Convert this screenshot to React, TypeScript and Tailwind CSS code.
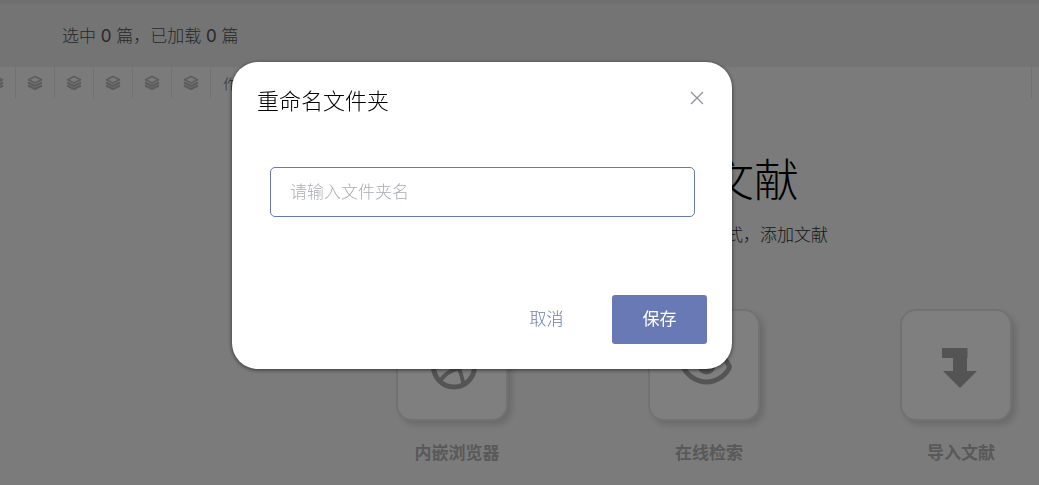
import React from 'react';

const LayersIcon = () => (
  <svg className="w-4 h-4" viewBox="0 0 16 16" fill="none" stroke="currentColor" strokeLinejoin="round" aria-hidden="true">
    <path d="M8 1.500L14.500 4.800L8 8L1.500 4.800Z" strokeWidth="1.600" />
    <path d="M1 7.500L8 11L15 7.500M1 10.500L8 14L15 10.500" strokeWidth="2.200" />
  </svg>
);

const BrowserIcon = () => (
  <svg className="w-12 h-12 overflow-visible" viewBox="0 -1 48 48" fill="none" stroke="currentColor" aria-hidden="true">
    <circle cx="26" cy="24.500" r="20.500" strokeWidth="5" />
    <path d="M12 39C16 33 22 28.500 30 26.500C36 25 41 23 46 22" strokeWidth="4" />
    <path d="M18 6C27 16 33 28 35.500 42M6 20C20 21 32 18 40 10" strokeWidth="4" />
  </svg>
);

const EyeIcon = () => (
  <svg className="w-12 h-12 overflow-visible" viewBox="0 -1 48 48" fill="none" stroke="currentColor" aria-hidden="true">
    <path d="M3.500 24.500C14 4 40 4 49.500 24.500C48 31 38 40 26.500 40C15 40 5 31 3.500 24.500Z" strokeWidth="5" strokeLinejoin="round" />
    <circle cx="26.500" cy="23.500" r="9" fill="currentColor" stroke="none" />
  </svg>
);

const ImportIcon = () => (
  <svg className="w-12 h-12 overflow-visible" viewBox="0 -1 48 48" fill="currentColor" aria-hidden="true">
    <path d="M10 6H35.500V16H35V29H45L28 46L11 29H21V16H10Z" />
  </svg>
);

const SOURCES = [
  { label: '内嵌浏览器', Icon: BrowserIcon },
  { label: '在线检索', Icon: EyeIcon },
  { label: '导入文献', Icon: ImportIcon },
];

const LibraryPage: React.FC = () => (
  <div className="min-h-screen bg-[#f7f7f7] border-t-4 border-[#dedee0]">
    <header className="h-[63px] pl-[62px] bg-[#e9e9e9] text-[17px] leading-[64px] text-[#505050] font-light font-[Inter,'Noto_Sans_CJK_SC',sans-serif]">
      选中 <span className="font-normal">0</span> 篇，已加载 <span className="font-normal">0</span> 篇
    </header>

    <div className="flex h-[31px] mr-[7px] -ml-[23px] border-r border-[#e3e3e3]">
      {[0, 1, 2, 3, 4, 5].map((i) => (
        <div key={i} className="flex items-center justify-center w-[39px] shrink-0 border-r border-[#e3e3e3] text-[#b8b8b8]">
          <LayersIcon />
        </div>
      ))}
      <div className="flex items-center pl-3 text-sm font-light text-[#606060]">作者</div>
    </div>

    <main className="flex flex-col items-center ml-[379px] pt-[48px]">
      <h1 className="text-[45px] leading-[64px] font-light text-black">添加文献</h1>
      <p className="mt-[10px] text-[17px] leading-[28px] font-light text-[#303030] whitespace-nowrap">请选择以下一种方式，添加文献</p>
      <div className="flex gap-[130px] mt-[61px]">
        {SOURCES.map(({ label, Icon }) => (
          <button key={label} type="button" className="w-[122px] shrink-0 text-[#a8a8a8]">
            <span className="flex items-center justify-center w-28 h-28 rounded-2xl border-2 border-[#e4e4e4] bg-white shadow-[4px_4px_6px_#d4d4d4]">
              <Icon />
            </span>
            <span className="block mt-[17px] text-[17px] leading-[28px] font-bold text-[#b2b2b2] whitespace-nowrap">{label}</span>
          </button>
        ))}
      </div>
    </main>
  </div>
);

const RenameDialog: React.FC = () => (
  <div className="fixed inset-0 flex items-start justify-center pt-[62px] pr-[75px] bg-black/50">
    <form
      role="dialog"
      aria-labelledby="rename-title"
      className="w-[500px] rounded-[26px] bg-white shadow-[0_1px_4px_rgba(0,0,0,0.6)]"
      onSubmit={(e) => e.preventDefault()}
    >
      <div className="flex items-center justify-between pl-[25px] pr-7 pt-[21px]">
        <h2 id="rename-title" className="text-[22px] leading-[32px] font-light text-black">重命名文件夹</h2>
        <button type="button" aria-label="关闭" className="pb-[2px] text-[#909399]">
          <svg className="w-[14px] h-[14px]" viewBox="0 0 14 14" fill="none" stroke="currentColor" strokeWidth="1.300">
            <path d="M1 1L13 13M13 1L1 13" />
          </svg>
        </button>
      </div>
      <div className="pl-[38px] pr-[37px] pt-[52px]">
        <input
          type="text"
          aria-label="文件夹名"
          placeholder="请输入文件夹名"
          className="w-full h-[50px] px-[19px] pb-1 rounded-[5px] border border-[#6979b6] text-[17px] font-light text-black placeholder:text-[#a8acb4] outline-none"
        />
      </div>
      <div className="flex justify-end gap-[18px] pt-[78px] pr-[25px] pb-[25px] text-[17px]">
        <button type="button" className="w-[95px] h-[49px] pb-[3px] font-light text-[#6979b6]">取消</button>
        <button type="submit" className="w-[95px] h-[49px] pb-[3px] rounded-[3px] bg-[#6979b6] text-white">保存</button>
      </div>
    </form>
  </div>
);

export default function App() {
  return (
    <div className="h-screen overflow-hidden font-['Noto_Sans_CJK_SC',sans-serif]">
      <LibraryPage />
      <RenameDialog />
    </div>
  );
}
